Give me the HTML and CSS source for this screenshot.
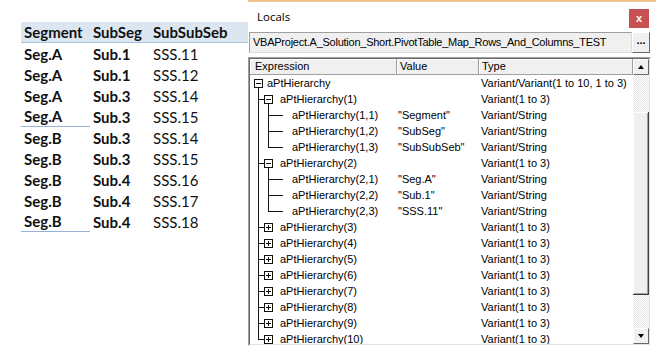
FILE: index.html
```html
<!DOCTYPE html>
<html lang="en">
<head>
    <meta charset="UTF-8">
    <title>Locals</title>
    <link rel="stylesheet" href="styles.css">
</head>
<body>
    <div class="sheet">
        <div class="sheet-row sheet-head">
            <span>Segment</span><span>SubSeg</span><span>SubSubSeb</span>
        </div>
        <div class="sheet-row"><span class="b">Seg.A</span><span class="b">Sub.1</span><span>SSS.11</span></div>
        <div class="sheet-row"><span class="b">Seg.A</span><span class="b">Sub.1</span><span>SSS.12</span></div>
        <div class="sheet-row"><span class="b">Seg.A</span><span class="b">Sub.3</span><span>SSS.14</span></div>
        <div class="sheet-row"><span class="b sep">Seg.A</span><span class="b">Sub.3</span><span>SSS.15</span></div>
        <div class="sheet-row"><span class="b">Seg.B</span><span class="b">Sub.3</span><span>SSS.14</span></div>
        <div class="sheet-row"><span class="b">Seg.B</span><span class="b">Sub.3</span><span>SSS.15</span></div>
        <div class="sheet-row"><span class="b">Seg.B</span><span class="b">Sub.4</span><span>SSS.16</span></div>
        <div class="sheet-row"><span class="b">Seg.B</span><span class="b">Sub.4</span><span>SSS.17</span></div>
        <div class="sheet-row"><span class="b sep">Seg.B</span><span class="b">Sub.4</span><span>SSS.18</span></div>
    </div>

    <div class="locals">
        <div class="titlebar">
            <span class="title">Locals</span>
            <span class="close">x</span>
        </div>
        <div class="context">
            <div class="ctx-field">VBAProject.A_Solution_Short.PivotTable_Map_Rows_And_Columns_TEST</div>
            <div class="ctx-btn">...</div>
        </div>
        <div class="list">
            <div class="list-inner">
                <div class="list-main">
                    <div class="list-head">
                        <div class="hcell h-expr">Expression</div>
                        <div class="hcell h-val">Value</div>
                        <div class="hcell h-typ">Type</div>
                    </div>

                    <!-- root -->
                    <div class="row lv0">
                        <div class="expr"><span class="tc node open"><i class="box"></i></span><span class="name">aPtHierarchy</span></div>
                        <div class="val"></div>
                        <div class="typ">Variant/Variant(1 to 10, 1 to 3)</div>
                    </div>

                    <div class="row lv1">
                        <div class="expr"><span class="tc tee"></span><span class="tc node stub open"><i class="box"></i></span><span class="name">aPtHierarchy(1)</span></div>
                        <div class="val"></div>
                        <div class="typ">Variant(1 to 3)</div>
                    </div>
                    <div class="row lv2">
                        <div class="expr"><span class="tc ln"></span><span class="tc tee"></span><span class="tc hz"></span><span class="name">aPtHierarchy(1,1)</span></div>
                        <div class="val">"Segment"</div>
                        <div class="typ">Variant/String</div>
                    </div>
                    <div class="row lv2">
                        <div class="expr"><span class="tc ln"></span><span class="tc tee"></span><span class="tc hz"></span><span class="name">aPtHierarchy(1,2)</span></div>
                        <div class="val">"SubSeg"</div>
                        <div class="typ">Variant/String</div>
                    </div>
                    <div class="row lv2">
                        <div class="expr"><span class="tc ln"></span><span class="tc end"></span><span class="tc hz"></span><span class="name">aPtHierarchy(1,3)</span></div>
                        <div class="val">"SubSubSeb"</div>
                        <div class="typ">Variant/String</div>
                    </div>

                    <div class="row lv1">
                        <div class="expr"><span class="tc tee"></span><span class="tc node stub open"><i class="box"></i></span><span class="name">aPtHierarchy(2)</span></div>
                        <div class="val"></div>
                        <div class="typ">Variant(1 to 3)</div>
                    </div>
                    <div class="row lv2">
                        <div class="expr"><span class="tc ln"></span><span class="tc tee"></span><span class="tc hz"></span><span class="name">aPtHierarchy(2,1)</span></div>
                        <div class="val">"Seg.A"</div>
                        <div class="typ">Variant/String</div>
                    </div>
                    <div class="row lv2">
                        <div class="expr"><span class="tc ln"></span><span class="tc tee"></span><span class="tc hz"></span><span class="name">aPtHierarchy(2,2)</span></div>
                        <div class="val">"Sub.1"</div>
                        <div class="typ">Variant/String</div>
                    </div>
                    <div class="row lv2">
                        <div class="expr"><span class="tc ln"></span><span class="tc end"></span><span class="tc hz"></span><span class="name">aPtHierarchy(2,3)</span></div>
                        <div class="val">"SSS.11"</div>
                        <div class="typ">Variant/String</div>
                    </div>

                    <div class="row lv1">
                        <div class="expr"><span class="tc tee"></span><span class="tc node stub"><i class="box plus"></i></span><span class="name">aPtHierarchy(3)</span></div>
                        <div class="val"></div>
                        <div class="typ">Variant(1 to 3)</div>
                    </div>
                    <div class="row lv1">
                        <div class="expr"><span class="tc tee"></span><span class="tc node stub"><i class="box plus"></i></span><span class="name">aPtHierarchy(4)</span></div>
                        <div class="val"></div>
                        <div class="typ">Variant(1 to 3)</div>
                    </div>
                    <div class="row lv1">
                        <div class="expr"><span class="tc tee"></span><span class="tc node stub"><i class="box plus"></i></span><span class="name">aPtHierarchy(5)</span></div>
                        <div class="val"></div>
                        <div class="typ">Variant(1 to 3)</div>
                    </div>
                    <div class="row lv1">
                        <div class="expr"><span class="tc tee"></span><span class="tc node stub"><i class="box plus"></i></span><span class="name">aPtHierarchy(6)</span></div>
                        <div class="val"></div>
                        <div class="typ">Variant(1 to 3)</div>
                    </div>
                    <div class="row lv1">
                        <div class="expr"><span class="tc tee"></span><span class="tc node stub"><i class="box plus"></i></span><span class="name">aPtHierarchy(7)</span></div>
                        <div class="val"></div>
                        <div class="typ">Variant(1 to 3)</div>
                    </div>
                    <div class="row lv1">
                        <div class="expr"><span class="tc tee"></span><span class="tc node stub"><i class="box plus"></i></span><span class="name">aPtHierarchy(8)</span></div>
                        <div class="val"></div>
                        <div class="typ">Variant(1 to 3)</div>
                    </div>
                    <div class="row lv1">
                        <div class="expr"><span class="tc tee"></span><span class="tc node stub"><i class="box plus"></i></span><span class="name">aPtHierarchy(9)</span></div>
                        <div class="val"></div>
                        <div class="typ">Variant(1 to 3)</div>
                    </div>
                    <div class="row lv1">
                        <div class="expr"><span class="tc end"></span><span class="tc node stub"><i class="box plus"></i></span><span class="name">aPtHierarchy(10)</span></div>
                        <div class="val"></div>
                        <div class="typ">Variant(1 to 3)</div>
                    </div>
                </div>

                <div class="scrollbar">
                    <div class="sb-btn up"></div>
                    <div class="sb-track top"></div>
                    <div class="sb-thumb"></div>
                    <div class="sb-track"></div>
                    <div class="sb-btn down"></div>
                </div>
            </div>
        </div>
    </div>
</body>
</html>
```

FILE: styles.css
```css
* {
    box-sizing: border-box;
}

body {
    margin: 0;
    width: 656px;
    height: 349px;
    overflow: hidden;
    background: #fff;
    display: flex;
    font-family: "Liberation Sans", Arial, sans-serif;
}

/* excel range on the left */
.sheet {
    width: 248px;
    flex: none;
    padding: 22px 0 0 21px;
    font-family: Lato, "Liberation Sans", sans-serif;
    font-size: 15px;
    color: #111;
}

.sheet-row {
    display: grid;
    grid-template-columns: 69px 60px 89px;
    height: 21px;
}

.sheet-row span {
    display: flex;
    align-items: center;
    padding-left: 3px;
}

.sheet-head {
    background: #dce6f1;
    border-bottom: 1px solid #a9c0de;
    font-weight: bold;
}

.b {
    font-weight: bold;
}

.sep {
    border-bottom: 1px solid #95b3d7;
}

/* locals window */
.locals {
    width: 408px;
    flex: none;
    border-top: 2px solid #efc48c;
    display: flex;
    flex-direction: column;
}

.titlebar {
    height: 28px;
    display: flex;
    align-items: center;
    justify-content: space-between;
    padding: 0 7px 0 9px;
}

.title {
    font-family: "Open Sans", "Noto Sans", sans-serif;
    font-size: 11.5px;
    color: #000;
}

.close {
    width: 20px;
    height: 19px;
    background: #c75050;
    color: #fff;
    font-size: 11px;
    font-weight: bold;
    display: flex;
    align-items: center;
    justify-content: center;
    margin-top: 4px;
}

.context {
    display: flex;
    height: 21px;
    margin: 2px 6px 0 1px;
    font-size: 11px;
}

.ctx-field {
    flex: 1;
    background: #f0f0f0;
    border: 1px solid #a0a0a0;
    border-right-color: #dcdcdc;
    border-bottom-color: #dcdcdc;
    padding-left: 3px;
    line-height: 19px;
    letter-spacing: -0.25px;
    white-space: nowrap;
    overflow: hidden;
}

.ctx-btn {
    width: 18px;
    flex: none;
    background: #f0f0f0;
    border: 1px solid;
    border-color: #fff #696969 #696969 #fff;
    font-weight: bold;
    text-align: center;
    line-height: 15px;
}

.list {
    margin: 4px 5px 0 0;
    height: 289px;
    border: 1px solid;
    border-color: #a0a0a0 #fff #fff #a0a0a0;
}

.list-inner {
    height: 100%;
    display: flex;
    border: 1px solid;
    border-color: #696969 #e3e3e3 #e3e3e3 #696969;
}

.list-main {
    width: 383px;
    flex: none;
    overflow: hidden;
    font-size: 11px;
    color: #000;
}

.list-head,
.row {
    display: grid;
    grid-template-columns: 147px 82px 154px;
}

.list-head {
    height: 16px;
}

.hcell {
    background: #f0f0f0;
    border-right: 1px solid #a0a0a0;
    border-bottom: 1px solid #a0a0a0;
    box-shadow: inset 1px 1px 0 #fff;
    line-height: 15px;
    padding-left: 3px;
}

.h-expr {
    padding-left: 5px;
}

.row {
    height: 16px;
    line-height: 16px;
    white-space: nowrap;
}

.expr {
    display: flex;
    padding-left: 3px;
}

.val {
    padding-left: 1px;
}

.typ {
    padding-left: 2px;
}

.lv0 .name {
    margin-left: 4px;
}

.lv1 .name {
    margin-left: 7px;
}

.lv2 .name {
    margin-left: 9px;
}

/* tree connector cells, 10px each */
.tc {
    width: 10px;
    height: 16px;
    flex: none;
    background-repeat: no-repeat;
}

.tc.ln {
    background-image: linear-gradient(#111, #111);
    background-position: 5px 0;
    background-size: 1px 16px;
}

.tc.tee {
    background-image: linear-gradient(#111, #111), linear-gradient(#111, #111);
    background-position: 5px 0, 5px 8px;
    background-size: 1px 16px, 5px 1px;
}

.tc.end {
    background-image: linear-gradient(#111, #111), linear-gradient(#111, #111);
    background-position: 5px 0, 5px 8px;
    background-size: 1px 9px, 5px 1px;
}

.tc.hz {
    background-image: linear-gradient(#111, #111);
    background-position: 0 8px;
    background-size: 10px 1px;
}

.tc.node {
    padding: 4px 0 0 1px;
}

.tc.node.open {
    background-image: linear-gradient(#111, #111);
    background-position: 5px 13px;
    background-size: 1px 3px;
}

.tc.node.stub {
    background-image: linear-gradient(#111, #111);
    background-position: 0 8px;
    background-size: 1px 1px;
}

.tc.node.stub.open {
    background-image: linear-gradient(#111, #111), linear-gradient(#111, #111);
    background-position: 0 8px, 5px 13px;
    background-size: 1px 1px, 1px 3px;
}

.box {
    display: block;
    width: 9px;
    height: 9px;
    border: 1px solid #111;
    background: #fff linear-gradient(#111, #111) 1px 3px / 5px 1px no-repeat;
}

.box.plus {
    background:
        linear-gradient(#111, #111) 1px 3px / 5px 1px no-repeat,
        linear-gradient(#111, #111) 3px 1px / 1px 5px no-repeat,
        #fff;
}

/* scrollbar */
.scrollbar {
    width: 16px;
    flex: none;
    display: flex;
    flex-direction: column;
}

.sb-btn {
    height: 16px;
    flex: none;
    background: #f0f0f0;
    border: 1px solid;
    border-color: #fff #696969 #696969 #fff;
    display: flex;
    align-items: center;
    justify-content: center;
}

.sb-btn::after {
    content: "";
    border-left: 3px solid transparent;
    border-right: 3px solid transparent;
}

.sb-btn.up::after {
    border-bottom: 4px solid #000;
}

.sb-btn.down::after {
    border-top: 4px solid #000;
}

.sb-track {
    flex: 1;
    background: repeating-conic-gradient(#fff 0 25%, #e4e4e4 0 50%) 0 0 / 2px 2px;
}

.sb-track.top {
    flex: none;
    height: 37px;
}

.sb-thumb {
    height: 183px;
    flex: none;
    background: #f0f0f0;
    border-right: 1px solid #404040;
    border-bottom: 1px solid #404040;
    box-shadow: inset 1px 1px 0 #fff, inset -1px -1px 0 #a0a0a0;
}
```
